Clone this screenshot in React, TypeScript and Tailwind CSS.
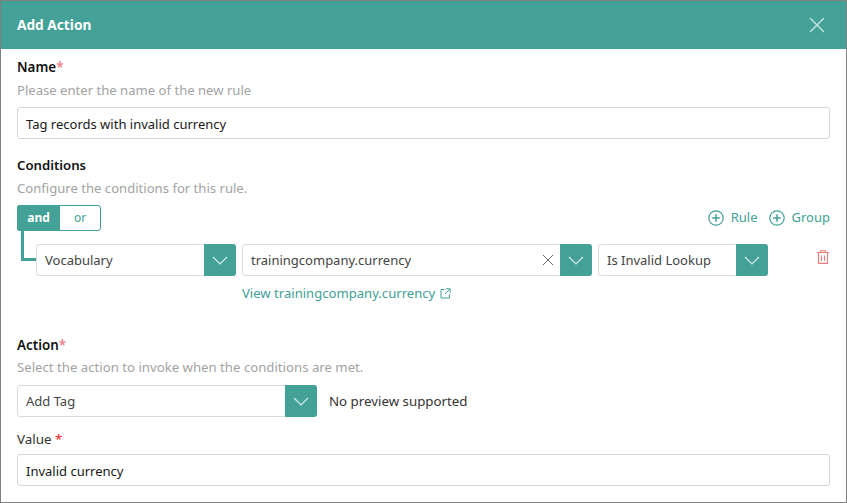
const FONT = "font-['Noto_Sans','Open_Sans',sans-serif]";

function Chevron() {
    return (
        <svg width="16" height="9" viewBox="0 0 16 9" fill="none" stroke="#d5ebe8" strokeWidth="1.2">
            <path d="M1 1l7 7 7-7" />
        </svg>
    );
}

function PlusCircle() {
    return (
        <svg width="16" height="16" viewBox="0 0 16 16" fill="none" stroke="#43a197" strokeWidth="1.2">
            <circle cx="8" cy="8" r="7.2" />
            <path d="M8 4.2v7.6M4.2 8h7.6" strokeWidth="1.5" />
        </svg>
    );
}

function Select({ value, width, clear }: { value: string; width: string; clear?: boolean }) {
    return (
        <div className={`${width} h-[32px] flex items-stretch bg-white border border-[#d9dcdc] rounded-[3px]`}>
            <div className="flex-1 flex items-center pl-2 text-[#444] text-[13px] leading-none">{value}</div>
            {clear && (
                <div className="flex items-center pr-[6px]">
                    <svg width="12" height="12" viewBox="0 0 12 12" fill="none" stroke="#666" strokeWidth="1">
                        <path d="M1 1l10 10M11 1L1 11" />
                    </svg>
                </div>
            )}
            <div className="w-[32px] -my-px -mr-px bg-[#43a197] rounded-r-[3px] flex items-center justify-center">
                <Chevron />
            </div>
        </div>
    );
}

function TextInput({ value }: { value: string }) {
    return (
        <div className="h-[32px] flex items-center px-2 pt-[2px] bg-white border border-[#d4d6d6] rounded-[3px] text-[13px] leading-none text-[#1a1a1a]">
            {value}
        </div>
    );
}

export default function App() {
    return (
        <div className={`${FONT} w-[847px] h-[503px] bg-white border border-[#808080] overflow-hidden`}>
            <div className="h-[48px] bg-[#43a197] flex items-center justify-between pl-4 pr-[21px]">
                <span className="text-white text-[13.7px] font-bold pt-[1px]">Add Action</span>
                <svg width="16" height="16" viewBox="0 0 16 16" fill="none" stroke="#c8e4e0" strokeWidth="1.4">
                    <path d="M1 1l14 14M15 1L1 15" />
                </svg>
            </div>

            <div className="px-4">
                <div className="h-[20px] mt-[8px] text-[13.4px] leading-[20px] font-semibold text-[#111]">
                    Name<span className="text-[#f0808a]">*</span>
                </div>
                <div className="h-[20px] mt-[3px] text-[13.1px] leading-[20px] text-[#a3a3a3]">Please enter the name of the new rule</div>
                <div className="mt-[7px]">
                    <TextInput value="Tag records with invalid currency" />
                </div>

                <div className="h-[20px] mt-[16px] text-[13.2px] leading-[20px] font-semibold text-[#111]">Conditions</div>
                <div className="h-[20px] mt-[3px] text-[13.1px] leading-[20px] text-[#a3a3a3]">Configure the conditions for this rule.</div>

                <div className="mt-[7px] flex items-start justify-between">
                    <div className="flex h-[26px] w-[84px] border border-[#43a197] rounded-[3px] text-[12px]">
                        <div className="w-[43px] -my-px -ml-px bg-[#43a197] rounded-l-[3px] text-white font-bold flex items-center justify-center">and</div>
                        <div className="flex-1 text-[#43a197] flex items-center justify-center">or</div>
                    </div>
                    <div className="flex items-center gap-[11px] mt-[3px] text-[13px] text-[#43a197]">
                        <div className="flex items-center gap-[7px]">
                            <PlusCircle />
                            Rule
                        </div>
                        <div className="flex items-center gap-[7px]">
                            <PlusCircle />
                            Group
                        </div>
                    </div>
                </div>

                <div className="flex items-start">
                    <div className="w-[15px] h-[30px] ml-[4px] border-l-[3px] border-b-[3px] border-[#43a197]"></div>
                    <div className="mt-[13px] flex gap-[6px]">
                        <Select value="Vocabulary" width="w-[200px]" />
                        <div>
                            <Select value="trainingcompany.currency" width="w-[350px]" clear />
                            <div className="mt-[7px] flex items-center gap-[5px] text-[13.1px] leading-[20px] text-[#43a197]">
                                View trainingcompany.currency
                                <svg width="11" height="11" viewBox="0 0 11 11" fill="none" stroke="#43a197" strokeWidth="1">
                                    <path d="M4.5 1.5H1v8.5h8.5V6.5M6 .8h4.2V5M10 1L5 6" />
                                </svg>
                            </div>
                        </div>
                        <Select value="Is Invalid Lookup" width="w-[170px]" />
                    </div>
                    <div className="ml-auto mt-[19px] mr-[1px]">
                        <svg width="12" height="14" viewBox="0 0 12 14" fill="none" stroke="#ee7a7a" strokeWidth="1.1">
                            <path d="M0 2.5h12M3.5 2V.7h5V2M1.5 3v10.4h9V3M4.5 5.5v5.5M7.5 5.5v5.5" />
                        </svg>
                    </div>
                </div>

                <div className="h-[20px] mt-[32px] text-[13.4px] leading-[20px] font-semibold text-[#111]">
                    Action<span className="text-[#f0808a]">*</span>
                </div>
                <div className="h-[20px] mt-[2px] text-[13.2px] leading-[20px] text-[#a3a3a3]">Select the action to invoke when the conditions are met.</div>
                <div className="mt-[8px] flex items-center gap-[12px]">
                    <Select value="Add Tag" width="w-[300px]" />
                    <span className="text-[13.3px] text-[#333] pt-[2px]">No preview supported</span>
                </div>
                <div className="h-[20px] mt-[12px] text-[13.4px] leading-[20px] text-[#333]">
                    Value <span className="text-[#f01818]">*</span>
                </div>
                <div className="mt-[5px]">
                    <TextInput value="Invalid currency" />
                </div>
            </div>
        </div>
    );
}
